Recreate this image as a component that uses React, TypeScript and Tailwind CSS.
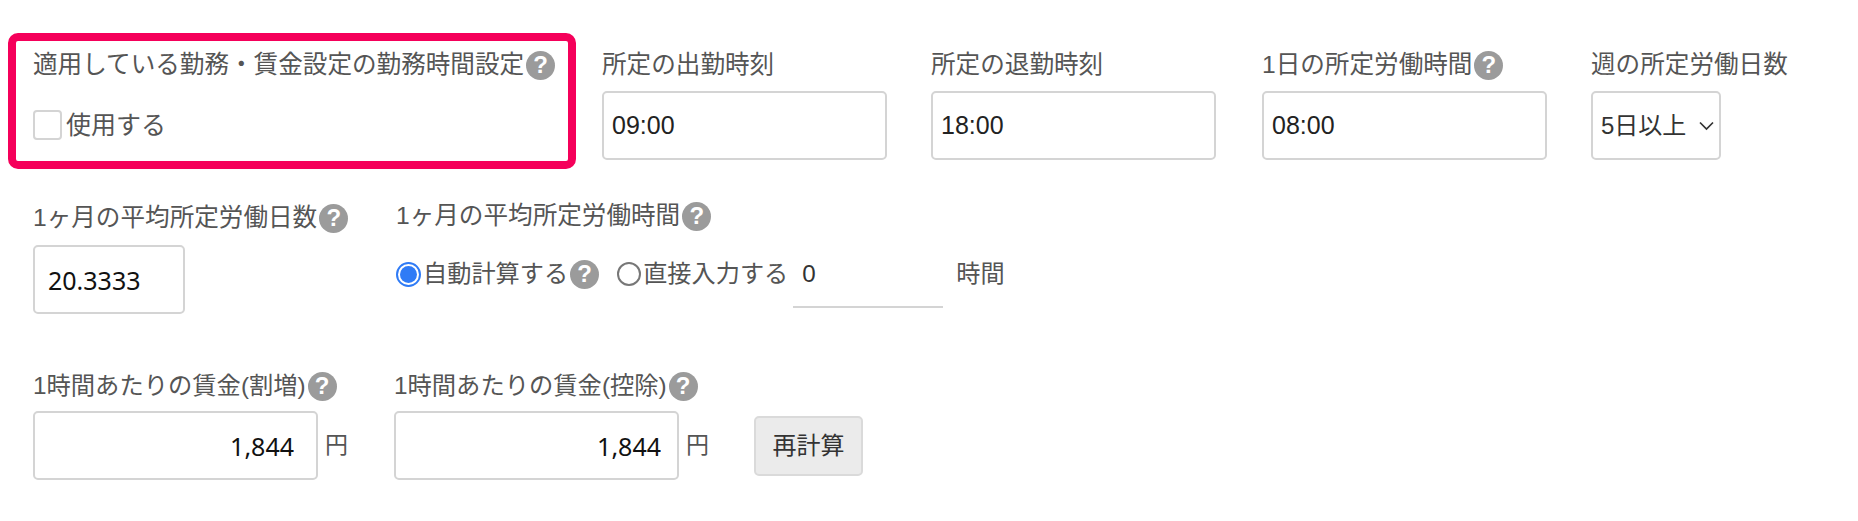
const jp = { fontFamily: '"Liberation Sans", "Noto Sans CJK JP", sans-serif' };

const Help = ({ className = "" }: { className?: string }) => (
  <span
    className={`inline-flex h-[29px] w-[29px] shrink-0 items-center justify-center rounded-full bg-[#9b9b9b] text-[24px] leading-none font-bold text-white ${className}`}
  >
    ?
  </span>
);

const Label = ({ text, help, size = "text-[24.6px]" }: { text: string; help?: boolean; size?: string }) => (
  <div className={`flex h-[34px] items-center whitespace-nowrap leading-none text-[#555] ${size}`}>
    <span>{text}</span>
    {help && <Help className="ml-[2px]" />}
  </div>
);

const TimeInput = ({ value }: { value: string }) => (
  <input
    readOnly
    value={value}
    className="mt-[9px] h-[69px] w-[285px] rounded-[5px] border-2 border-[#d4d4d4] bg-white px-[8px] text-[25px] text-[#222] outline-none"
  />
);

const Yen = ({ value, pad }: { value: string; pad: string }) => (
  <div className="mt-[8px] flex items-center">
    <input
      readOnly
      value={value}
      style={{ fontFamily: '"Noto Sans", sans-serif' }}
      className={`h-[69px] w-[285px] rounded-[5px] border-2 border-[#d4d4d4] bg-white pl-[8px] text-right text-[25px] text-[#111] outline-none ${pad}`}
    />
    <span className="ml-[7px] text-[23px] text-[#555]">円</span>
  </div>
);

export default function App() {
  return (
    <div className="min-h-[521px] w-[1858px] overflow-hidden bg-white" style={jp}>
      {/* 1段目 */}
      <div className="flex items-start pt-[33px] pl-[8px]">
        <div className="h-[136px] w-[568px] rounded-[10px] border-8 border-[#f5005a] pt-[7px] pl-[17px]">
          <Label text="適用している勤務・賃金設定の勤務時間設定" help />
          <div className="mt-[28px] flex items-center text-[25px] leading-none text-[#555]">
            <input
              type="checkbox"
              readOnly
              className="h-[30px] w-[29px] appearance-none rounded-[4px] border-2 border-[#d4d4d4] bg-white"
            />
            <span className="ml-[4px]">使用する</span>
          </div>
        </div>
        <div className="ml-[26px] w-[329px] pt-[15px]">
          <Label text="所定の出勤時刻" />
          <TimeInput value="09:00" />
        </div>
        <div className="w-[331px] pt-[15px]">
          <Label text="所定の退勤時刻" />
          <TimeInput value="18:00" />
        </div>
        <div className="w-[329px] pt-[15px]">
          <Label text="1日の所定労働時間" help />
          <TimeInput value="08:00" />
        </div>
        <div className="pt-[15px]">
          <Label text="週の所定労働日数" />
          <div className="relative mt-[9px] w-[130px]">
            <select className="h-[69px] w-full appearance-none rounded-[5px] border-2 border-[#d4d4d4] bg-white pl-[8px] text-[24px] text-[#333] outline-none">
              <option>5日以上</option>
            </select>
            <svg viewBox="0 0 16 10" className="pointer-events-none absolute top-[30px] right-[6px] h-[10px] w-[17px]" fill="none" stroke="#333" strokeWidth="1.7">
              <path d="M1.5 1.5 8 8l6.5-6.5" />
            </svg>
          </div>
        </div>
      </div>

      {/* 2段目 */}
      <div className="mt-[32px] flex items-start pl-[33px]">
        <div className="w-[363px]">
          <Label text="1ヶ月の平均所定労働日数" help />
          <input
            readOnly
            value="20.3333"
            style={{ fontFamily: '"Noto Sans", sans-serif' }}
            className="mt-[10px] h-[69px] w-[152px] rounded-[5px] border-2 border-[#d4d4d4] bg-white px-[13px] text-[25px] text-[#111] outline-none"
          />
        </div>
        <div className="-mt-[2px]">
          <Label text="1ヶ月の平均所定労働時間" help />
          <div className="mt-[21px] flex h-[40px] items-center whitespace-nowrap text-[24.2px] leading-none text-[#555]">
            <span className="flex h-[25px] w-[25px] items-center justify-center rounded-full border-2 border-[#2f7bf6]">
              <span className="h-[17px] w-[17px] rounded-full bg-[#2f7bf6]" />
            </span>
            <span className="ml-[2px]">自動計算する</span>
            <Help className="ml-[2px]" />
            <span className="ml-[18px] h-[24px] w-[24px] rounded-full border-2 border-[#777]" />
            <span className="ml-[2px]">直接入力する</span>
            <div className="ml-[5px] h-[54px] w-[150px] self-start border-b-2 border-[#d4d4d4] pt-[8px] pl-[9px] text-[#333]">0</div>
            <span className="ml-[13px]">時間</span>
          </div>
        </div>
      </div>

      {/* 3段目 */}
      <div className="mt-[55px] flex items-start pl-[33px]">
        <div className="w-[361px]">
          <Label text="1時間あたりの賃金(割増)" help size="text-[24.3px]" />
          <Yen value="1,844" pad="pr-[22px]" />
        </div>
        <div>
          <Label text="1時間あたりの賃金(控除)" help size="text-[24.3px]" />
          <Yen value="1,844" pad="pr-[16px]" />
        </div>
        <button className="mt-[47px] ml-[45px] h-[60px] w-[109px] rounded-[5px] border-2 border-[#dadada] bg-[#ebebeb] text-[24px] text-[#333]">
          再計算
        </button>
      </div>
    </div>
  );
}
